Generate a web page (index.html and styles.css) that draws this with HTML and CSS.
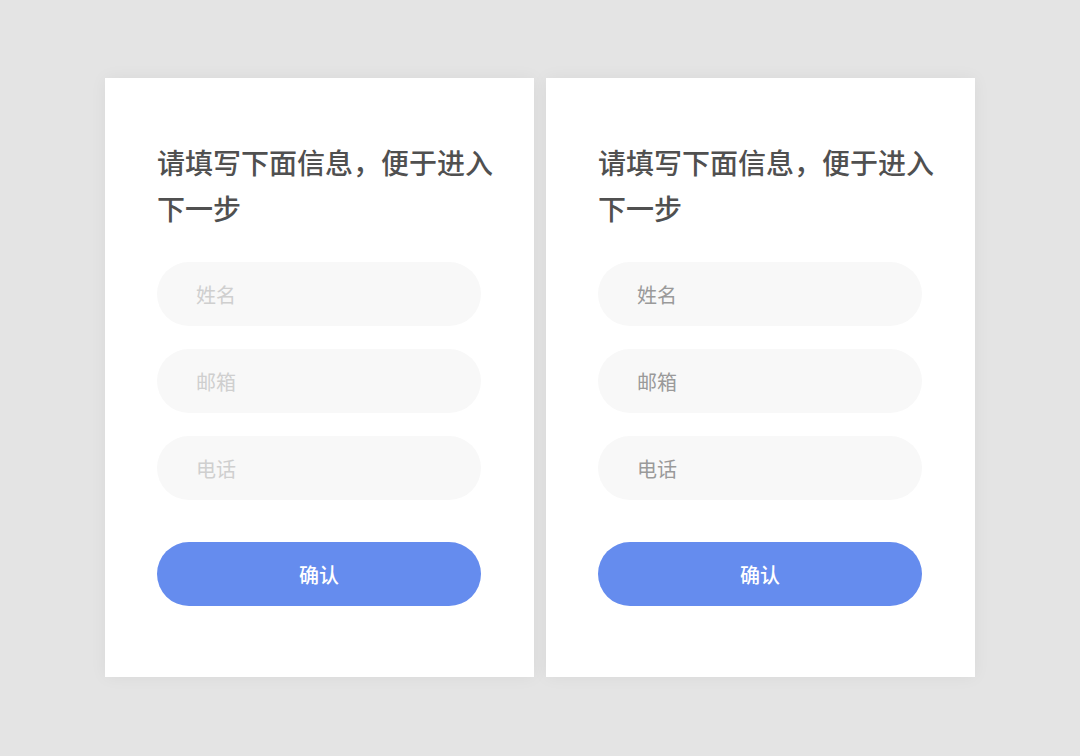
FILE: index.html
```html
<!DOCTYPE html>
<html lang="zh-CN">
<head>
<meta charset="utf-8">
<title>表单</title>
<link rel="stylesheet" href="styles.css">
</head>
<body>
<main class="stage">
  <section class="card">
    <h1 class="title">请填写下面信息，便于进入下一步</h1>
    <div class="fields">
      <div class="field field-light">姓名</div>
      <div class="field field-light">邮箱</div>
      <div class="field field-light">电话</div>
    </div>
    <button class="btn">确认</button>
  </section>
  <section class="card">
    <h1 class="title">请填写下面信息，便于进入下一步</h1>
    <div class="fields">
      <div class="field field-dark">姓名</div>
      <div class="field field-dark">邮箱</div>
      <div class="field field-dark">电话</div>
    </div>
    <button class="btn">确认</button>
  </section>
</main>
</body>
</html>
```
FILE: styles.css
```css
html, body {
  margin: 0;
  padding: 0;
  height: 100%;
}
body {
  background: #e4e4e4;
  font-family: "Noto Sans CJK SC", "Noto Sans", sans-serif;
}
.stage {
  display: flex;
  justify-content: center;
  gap: 12px;
  padding-top: 78px;
}
.card {
  width: 429px;
  height: 599px;
  box-sizing: border-box;
  background: #ffffff;
  padding: 61px 53px 0 52px;
  box-shadow: 0 0 16px rgba(0, 0, 0, 0.05);
}
.title {
  margin: 0 -20px 0 0;
  font-size: 28px;
  letter-spacing: 0;
  line-height: 46px;
  font-weight: 500;
  color: #505050;
}
.fields {
  display: flex;
  flex-direction: column;
  gap: 23px;
  margin-top: 31px;
}
.field {
  height: 64px;
  border-radius: 32px;
  background: #f8f8f8;
  padding-left: 39px;
  display: flex;
  align-items: center;
  font-size: 20px;
}
.field-light {
  color: #cfcfcf;
}
.field-dark {
  color: #9a9a9a;
}
.btn {
  display: block;
  width: 100%;
  height: 64px;
  margin-top: 42px;
  border: none;
  border-radius: 32px;
  background: #658cee;
  color: #ffffff;
  font-family: inherit;
  font-size: 20px;
  font-weight: 500;
  padding: 0;
}
```
